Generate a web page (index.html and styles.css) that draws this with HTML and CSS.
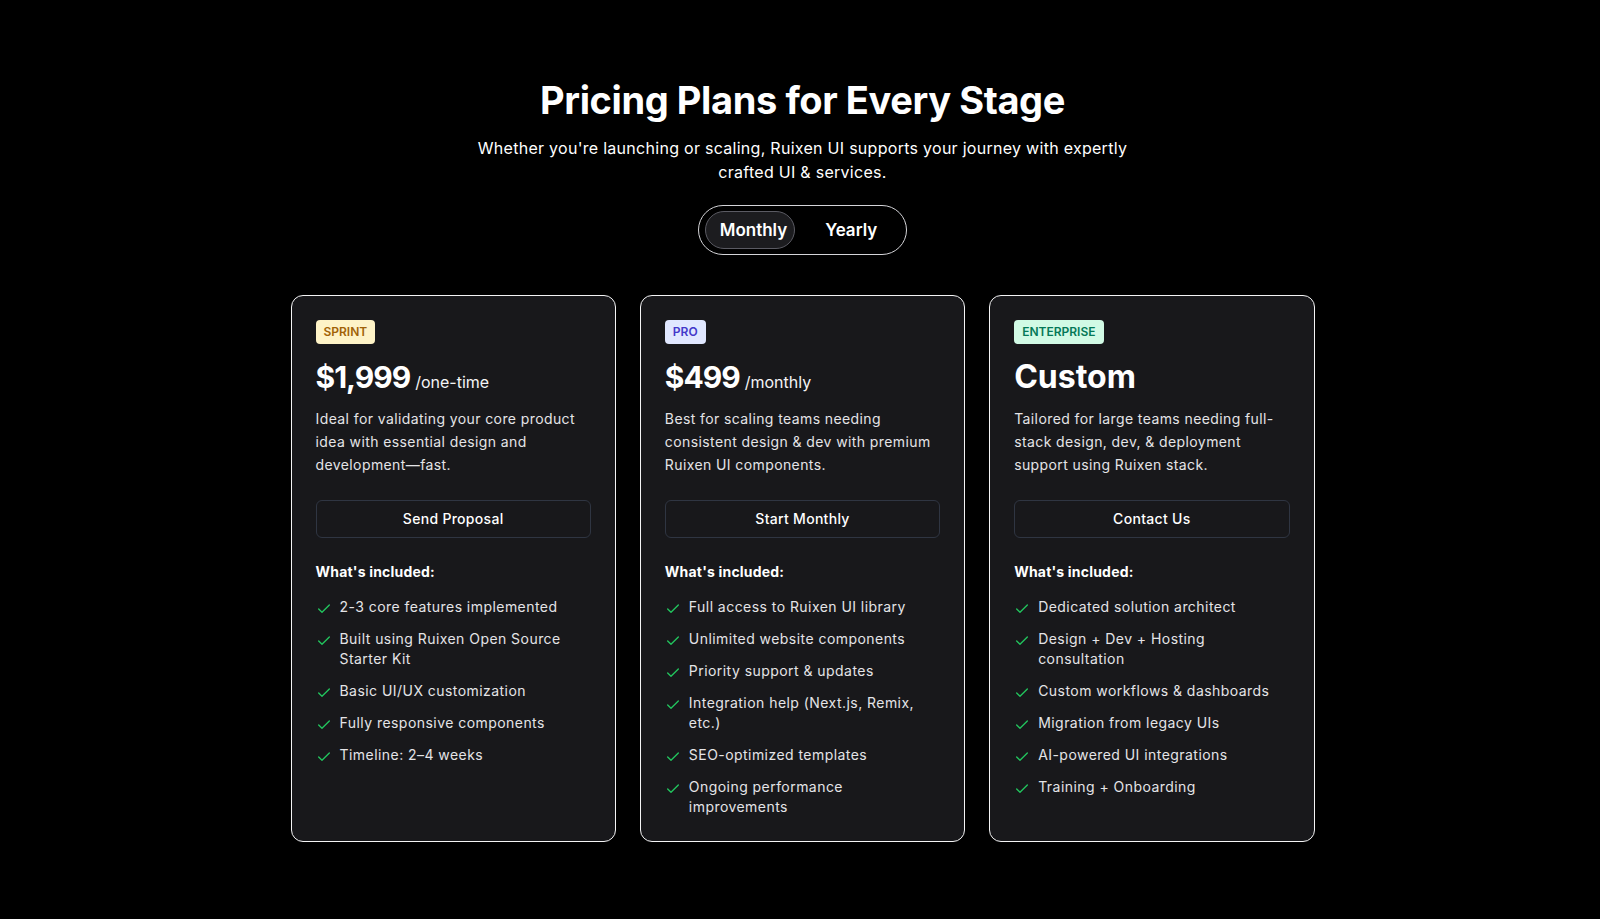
FILE: index.html
```html
<!DOCTYPE html>
<html lang="en">
<head>
<meta charset="utf-8">
<title>Pricing Plans</title>
<link rel="stylesheet" href="styles.css">
</head>
<body>
<section class="pricing">
  <header class="intro">
    <h1 class="title">Pricing Plans for Every Stage</h1>
    <p class="subtitle">Whether you're launching or scaling, Ruixen UI supports your journey with expertly crafted UI &amp; services.</p>
    <div class="toggle">
      <button class="toggle-btn active">Monthly</button>
      <button class="toggle-btn yearly">Yearly</button>
    </div>
  </header>

  <div class="plans">
    <article class="plan">
      <span class="badge badge-sprint">SPRINT</span>
      <div class="price"><span class="amount amount-num">$1,999</span><span class="period">/one-time</span></div>
      <p class="desc">Ideal for validating your core product idea with essential design and development—fast.</p>
      <button class="cta">Send Proposal</button>
      <h3 class="included">What's included:</h3>
      <ul class="features">
        <li class="feature"><svg class="check" viewBox="0 0 24 24"><path d="M20 6 9 17l-5-5"/></svg><span>2-3 core features implemented</span></li>
        <li class="feature"><svg class="check" viewBox="0 0 24 24"><path d="M20 6 9 17l-5-5"/></svg><span>Built using Ruixen Open Source Starter Kit</span></li>
        <li class="feature"><svg class="check" viewBox="0 0 24 24"><path d="M20 6 9 17l-5-5"/></svg><span>Basic UI/UX customization</span></li>
        <li class="feature"><svg class="check" viewBox="0 0 24 24"><path d="M20 6 9 17l-5-5"/></svg><span>Fully responsive components</span></li>
        <li class="feature"><svg class="check" viewBox="0 0 24 24"><path d="M20 6 9 17l-5-5"/></svg><span>Timeline: 2–4 weeks</span></li>
      </ul>
    </article>

    <article class="plan">
      <span class="badge badge-pro">PRO</span>
      <div class="price"><span class="amount amount-num">$499</span><span class="period">/monthly</span></div>
      <p class="desc">Best for scaling teams needing consistent design &amp; dev with premium Ruixen UI components.</p>
      <button class="cta">Start Monthly</button>
      <h3 class="included">What's included:</h3>
      <ul class="features">
        <li class="feature"><svg class="check" viewBox="0 0 24 24"><path d="M20 6 9 17l-5-5"/></svg><span>Full access to Ruixen UI library</span></li>
        <li class="feature"><svg class="check" viewBox="0 0 24 24"><path d="M20 6 9 17l-5-5"/></svg><span>Unlimited website components</span></li>
        <li class="feature"><svg class="check" viewBox="0 0 24 24"><path d="M20 6 9 17l-5-5"/></svg><span>Priority support &amp; updates</span></li>
        <li class="feature"><svg class="check" viewBox="0 0 24 24"><path d="M20 6 9 17l-5-5"/></svg><span>Integration help (Next.js, Remix, etc.)</span></li>
        <li class="feature"><svg class="check" viewBox="0 0 24 24"><path d="M20 6 9 17l-5-5"/></svg><span>SEO-optimized templates</span></li>
        <li class="feature"><svg class="check" viewBox="0 0 24 24"><path d="M20 6 9 17l-5-5"/></svg><span>Ongoing performance improvements</span></li>
      </ul>
    </article>

    <article class="plan">
      <span class="badge badge-enterprise">ENTERPRISE</span>
      <div class="price"><span class="amount">Custom</span></div>
      <p class="desc">Tailored for large teams needing full-stack design, dev, &amp; deployment support using Ruixen stack.</p>
      <button class="cta">Contact Us</button>
      <h3 class="included">What's included:</h3>
      <ul class="features">
        <li class="feature"><svg class="check" viewBox="0 0 24 24"><path d="M20 6 9 17l-5-5"/></svg><span>Dedicated solution architect</span></li>
        <li class="feature"><svg class="check" viewBox="0 0 24 24"><path d="M20 6 9 17l-5-5"/></svg><span>Design + Dev + Hosting consultation</span></li>
        <li class="feature"><svg class="check" viewBox="0 0 24 24"><path d="M20 6 9 17l-5-5"/></svg><span>Custom workflows &amp; dashboards</span></li>
        <li class="feature"><svg class="check" viewBox="0 0 24 24"><path d="M20 6 9 17l-5-5"/></svg><span>Migration from legacy UIs</span></li>
        <li class="feature"><svg class="check" viewBox="0 0 24 24"><path d="M20 6 9 17l-5-5"/></svg><span>AI-powered UI integrations</span></li>
        <li class="feature"><svg class="check" viewBox="0 0 24 24"><path d="M20 6 9 17l-5-5"/></svg><span>Training + Onboarding</span></li>
      </ul>
    </article>
  </div>
</section>
</body>
</html>
```

FILE: styles.css
```css
* { box-sizing: border-box; }

body {
  margin: 0;
  background: #000;
  color: #fff;
  font-family: Inter, "Noto Sans", sans-serif;
}

.pricing {
  padding: 76px 0 0 5px;
}

.intro {
  display: flex;
  flex-direction: column;
  align-items: center;
  text-align: center;
}

.title {
  margin: 0;
  font-size: 38px;
  line-height: 48px;
  font-weight: 700;
  letter-spacing: -0.4px;
}

.subtitle {
  margin: 12px 0 0;
  max-width: 672px;
  font-size: 16px;
  line-height: 24px;
  letter-spacing: 0.28px;
}

.toggle {
  margin-top: 21px;
  display: flex;
  border: 1px solid #d4d4d8;
  border-radius: 999px;
  padding: 5px 6px;
}

.toggle-btn {
  font-family: Inter, "Noto Sans", sans-serif;
  font-size: 17px;
  line-height: 28px;
  font-weight: 600;
  color: #fff;
  background: transparent;
  border: 1px solid transparent;
  border-radius: 999px;
  padding: 4px 7px 4px 14px;
}

.toggle-btn.active {
  background: #1c1c1f;
  border-color: #5b5b63;
}

.toggle-btn.yearly {
  padding: 4px 22px 4px 29px;
}

.plans {
  width: 1024px;
  margin: 40px auto 0;
  display: grid;
  grid-template-columns: repeat(3, 1fr);
  gap: 24px;
}

.plan {
  background: #18181b;
  border: 1px solid #f4f4f5;
  border-radius: 12px;
  padding: 24px;
  display: flex;
  flex-direction: column;
  align-items: stretch;
}

.badge {
  align-self: flex-start;
  font-size: 12px;
  line-height: 16px;
  font-weight: 600;
  padding: 4px 8px;
  border-radius: 4px;
}

.badge-sprint { background: #fef3c7; color: #a16207; }
.badge-pro { background: #e0e7ff; color: #4338ca; }
.badge-enterprise { background: #d1fae5; color: #047857; }

.price {
  margin-top: 13px;
  display: flex;
  align-items: baseline;
  gap: 5px;
}

.amount {
  font-size: 32px;
  line-height: 40px;
  font-weight: 700;
}

.amount-num {
  font-size: 30px;
  letter-spacing: -1px;
}

.period {
  font-size: 16px;
  color: #f4f4f5;
}

.desc {
  margin: 11px 0 0;
  font-size: 14px;
  line-height: 22.75px;
  letter-spacing: 0.4px;
  color: #e4e4e7;
}

.cta {
  margin-top: 24px;
  height: 38px;
  border: 1px solid #2f3542;
  border-radius: 6px;
  background: transparent;
  color: #fff;
  font-family: Inter, "Noto Sans", sans-serif;
  font-size: 14px;
  line-height: 20px;
  font-weight: 500;
  letter-spacing: 0.3px;
}

.included {
  margin: 24px 0 0;
  font-size: 14px;
  line-height: 20px;
  font-weight: 700;
  letter-spacing: 0.2px;
}

.features {
  list-style: none;
  margin: 15px 0 0;
  padding: 0;
  display: flex;
  flex-direction: column;
  gap: 12px;
}

.feature {
  display: flex;
  gap: 8px;
  font-size: 14px;
  line-height: 20px;
  letter-spacing: 0.45px;
  color: #e4e4e7;
}

.check {
  width: 16px;
  height: 16px;
  flex-shrink: 0;
  margin-top: 4px;
  fill: none;
  stroke: #22c55e;
  stroke-width: 2;
  stroke-linecap: round;
  stroke-linejoin: round;
}
```
